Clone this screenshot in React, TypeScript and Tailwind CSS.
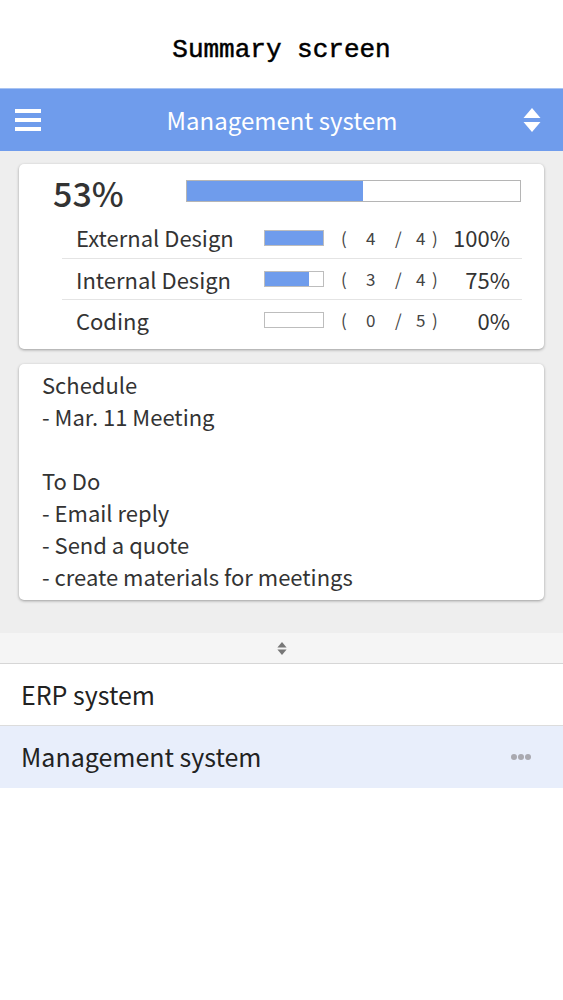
import React from "react";

const tasks = [
  { name: "External Design", done: 4, total: 4 },
  { name: "Internal Design", done: 3, total: 4 },
  { name: "Coding", done: 0, total: 5 },
];

function SortIcon({ className }: { className?: string }) {
  return (
    <svg viewBox="0 0 18 24" className={className} fill="currentColor">
      <path d="M9 0 L17.5 10 L0.5 10 Z" />
      <path d="M0.5 14 L17.5 14 L9 24 Z" />
    </svg>
  );
}

export default function App() {
  const done = tasks.reduce((s, t) => s + t.done, 0);
  const total = tasks.reduce((s, t) => s + t.total, 0);
  const overall = Math.floor((done / total) * 100);

  return (
    <div className="min-h-screen bg-white text-[#333] font-['Noto_Sans_CJK_JP','Noto_Sans',sans-serif]">
      <div className="h-[88px] flex items-center justify-center pt-[13px]">
        <h1 className="text-[26px] text-black font-['Liberation_Mono',monospace] [-webkit-text-stroke:0.5px_black]">Summary screen</h1>
      </div>

      <header className="h-[63px] bg-[#6f9cec] border-t border-[#a8c3f2] flex items-center justify-between pl-[15px] pr-[22px] text-white">
        <div className="flex flex-col gap-[5px] w-[26px]">
          <span className="h-[4px] bg-white" />
          <span className="h-[4px] bg-white" />
          <span className="h-[4px] bg-white" />
        </div>
        <div className="text-[24px] leading-none">Management system</div>
        <SortIcon className="w-[18px] h-[24px] text-white" />
      </header>

      <main className="bg-[#eeeeee] px-[19px] pt-[13px] pb-[33px] flex flex-col gap-[15px]">
        <section className="bg-white rounded-[5px] shadow-[0_1px_3px_rgba(0,0,0,0.35)] pb-[9px]">
          <div className="h-[53px] flex items-center pl-[34px] pr-[23px]">
            <div className="w-[133px] text-[34px] font-medium leading-none pt-[4px]">{overall}%</div>
            <div className="flex-1 h-[22px] border border-[#b5b5b5] bg-white">
              <div className="h-full bg-[#6f9cec]" style={{ width: `${overall}%` }} />
            </div>
          </div>
          <div className="ml-[43px] mr-[22px]">
            {tasks.map((t, i) => (
              <div
                key={t.name}
                className={`h-[41px] flex items-center pl-[14px] pr-[12px] ${i > 0 ? "border-t border-[#e4e4e4]" : ""}`}
              >
                <div className="w-[188px] text-[22px]">{t.name}</div>
                <div className="w-[60px] h-[16px] border border-[#bdbdbd] bg-white">
                  <div className="h-full bg-[#6f9cec]" style={{ width: `${(t.done / t.total) * 100}%` }} />
                </div>
                <div className="flex items-center ml-[17px] text-[17px] text-[#444]">
                  <span className="w-[25px]">(</span>
                  <span className="w-[29px]">{t.done}</span>
                  <span className="w-[21px]">/</span>
                  <span className="w-[16px]">{t.total}</span>
                  <span>)</span>
                </div>
                <div className="flex-1 text-right text-[22px]">{Math.round((t.done / t.total) * 100)}%</div>
              </div>
            ))}
          </div>
        </section>

        <section className="bg-white rounded-[5px] shadow-[0_1px_3px_rgba(0,0,0,0.35)] px-[23px] pt-[4px] pb-[8px] text-[22px] leading-[32px]">
          <p>Schedule</p>
          <p>- Mar. 11 Meeting</p>
          <p>&nbsp;</p>
          <p>To Do</p>
          <p>- Email reply</p>
          <p>- Send a quote</p>
          <p>- create materials for meetings</p>
        </section>
      </main>

      <div className="h-[31px] bg-[#f5f5f5] border-b border-[#d6d6d6] flex items-center justify-center">
        <SortIcon className="w-[10px] h-[13px] text-[#777]" />
      </div>

      <ul>
        <li className="h-[62px] flex items-center px-[21px] text-[25px] text-[#222] border-b border-[#dcdcdc]">ERP system</li>
        <li className="h-[62px] flex items-center justify-between px-[21px] pr-[32px] text-[25px] text-[#222] bg-[#e8eefb]">
          <span>Management system</span>
          <span className="flex gap-[1px]">
            <span className="w-[6px] h-[6px] rounded-full bg-[#a9a9b0]" />
            <span className="w-[6px] h-[6px] rounded-full bg-[#a9a9b0]" />
            <span className="w-[6px] h-[6px] rounded-full bg-[#a9a9b0]" />
          </span>
        </li>
      </ul>
    </div>
  );
}
